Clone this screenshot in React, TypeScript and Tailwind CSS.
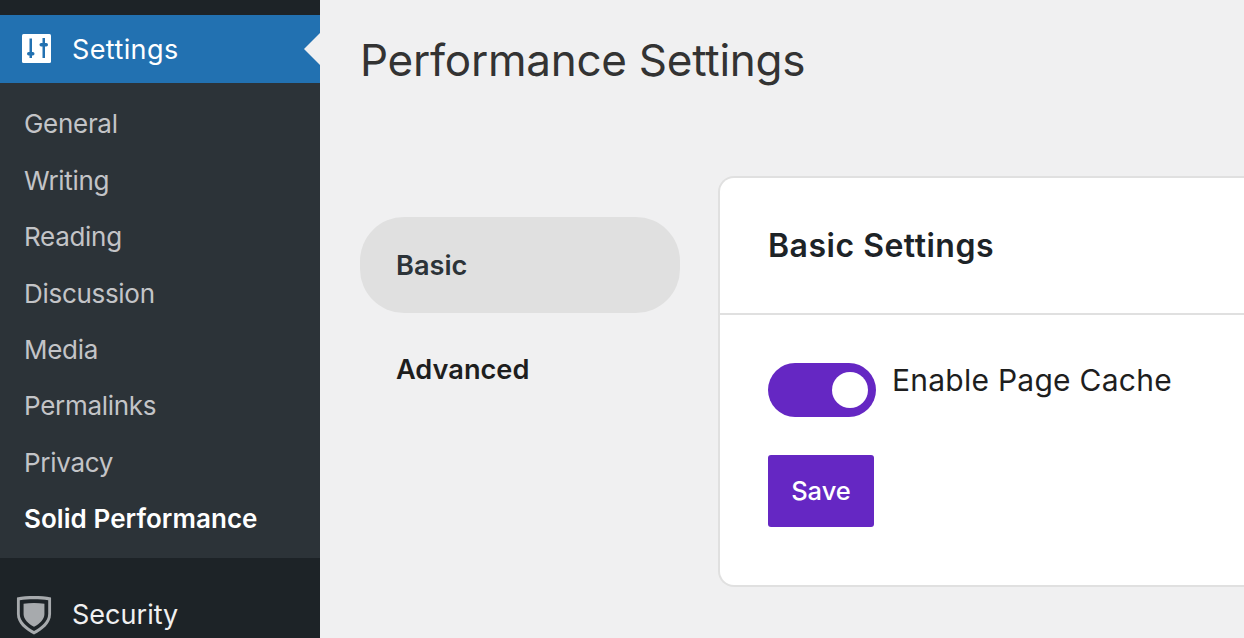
import React from "react";

const items = ["General", "Writing", "Reading", "Discussion", "Media", "Permalinks", "Privacy"];

function SettingsIcon() {
  return (
    <svg width="30" height="30" viewBox="0 0 30 30" className="shrink-0">
      <rect x="0" y="0" width="29" height="29" rx="1.5" fill="#fff" />
      <rect x="7.500" y="4.500" width="2.500" height="19.500" fill="#2271b1" />
      <rect x="20.500" y="4" width="2.500" height="20" fill="#2271b1" />
      <rect x="5" y="18" width="7.500" height="3.500" rx="1.700" fill="#2271b1" />
      <rect x="17.500" y="9" width="8.500" height="3.500" rx="1.700" fill="#2271b1" />
    </svg>
  );
}

function ShieldIcon() {
  return (
    <svg width="36" height="40" viewBox="0 0 38 42" className="shrink-0">
      <path d="M1 2.500C12 .5 26 .5 37 2.500V20C37 30 28 37 19 41.500 10 37 1 30 1 20Z" fill="#a7aaad" />
      <path d="M4 5.500C13 4 25 4 34 5.500V20C34 28 26.500 33.500 19 38 11.500 33.500 4 28 4 20Z" fill="#1d2327" />
      <path d="M8 9C15 8 23 8 30 9V20C30 26 24.500 30.500 19 33.500 13.500 30.500 8 26 8 20Z" fill="#a7aaad" />
    </svg>
  );
}

export default function App() {
  return (
    <div className="flex h-[638px] w-[1244px] overflow-hidden bg-[#f0f0f1] font-['Inter',sans-serif]">
      <aside className="flex w-[320px] shrink-0 flex-col bg-[#1d2327]">
        <div className="h-[15px]" />
        <div className="relative flex h-[68px] items-center gap-[20px] bg-[#2271b1] pl-[22px] text-[27px] tracking-[0.4px] text-white">
          <SettingsIcon />
          <span className="pt-[1px] leading-[32px]">Settings</span>
          <div className="absolute right-0 top-[18px] h-0 w-0 border-y-[16px] border-r-[16px] border-y-transparent border-r-[#f0f0f1]" />
        </div>
        <nav className="flex h-[475px] flex-col bg-[#2c3338] pt-[13.4px] text-[26px] leading-[56.4px] tracking-[-0.3px] text-[#c3c4c7]">
          {items.map((item) => (
            <div key={item} className="h-[56.4px] pl-[24px]">{item}</div>
          ))}
          <div className="h-[56.4px] pl-[24px] font-semibold tracking-[0.06px] text-white">Solid Performance</div>
        </nav>
        <div className="flex items-center gap-[20px] pl-[16px] pt-[35px] text-[27px] leading-[42px] tracking-[0.02px] text-[#f0f0f1]">
          <ShieldIcon />
          <span className="pt-[1px]">Security</span>
        </div>
      </aside>

      <main className="min-w-0 flex-1 pl-[40px]">
        <h1 className="mt-[33px] text-[44px] font-normal leading-[54px] tracking-[-0.25px] text-[#333333]">Performance Settings</h1>
        <div className="mt-[89px] flex items-start">
          <div className="mr-[38px] flex w-[320px] shrink-0 flex-col pt-[41px]">
            <div className="flex h-[96px] items-center rounded-[44px] bg-[#e0e0e0] pl-[36px] pt-[3px] text-[27.200px] font-semibold text-[#2c3338]">Basic</div>
            <div className="mt-[8px] flex h-[96px] items-center pl-[36px] pt-[3px] text-[27.200px] font-semibold text-[#1e1e1e]">Advanced</div>
          </div>
          <section className="h-[411px] w-[600px] shrink-0 rounded-l-[16px] border-y-2 border-l-2 border-[#e0e0e0] bg-white">
            <div className="flex h-[137px] items-center border-b-2 border-[#e0e0e0] pl-[48px]">
              <h2 className="text-[32px] font-semibold leading-[40px] tracking-[0.5px] text-[#1d2327]">Basic Settings</h2>
            </div>
            <div className="pl-[48px] pt-[48px]">
              <div className="flex items-start gap-[16px]">
                <div className="flex h-[54px] w-[108px] items-center justify-end rounded-full bg-[#6527c3] pr-[8px]">
                  <div className="h-[36px] w-[36px] rounded-full bg-white" />
                </div>
                <span className="text-[30px] leading-[34px] tracking-[0.25px] text-[#1e1e1e]">Enable Page Cache</span>
              </div>
              <button className="mt-[38px] flex h-[72px] w-[106px] items-center justify-center rounded-[3px] bg-[#6527c3] pt-[1px] text-[25.500px] font-medium text-white">Save</button>
            </div>
          </section>
        </div>
      </main>
    </div>
  );
}
